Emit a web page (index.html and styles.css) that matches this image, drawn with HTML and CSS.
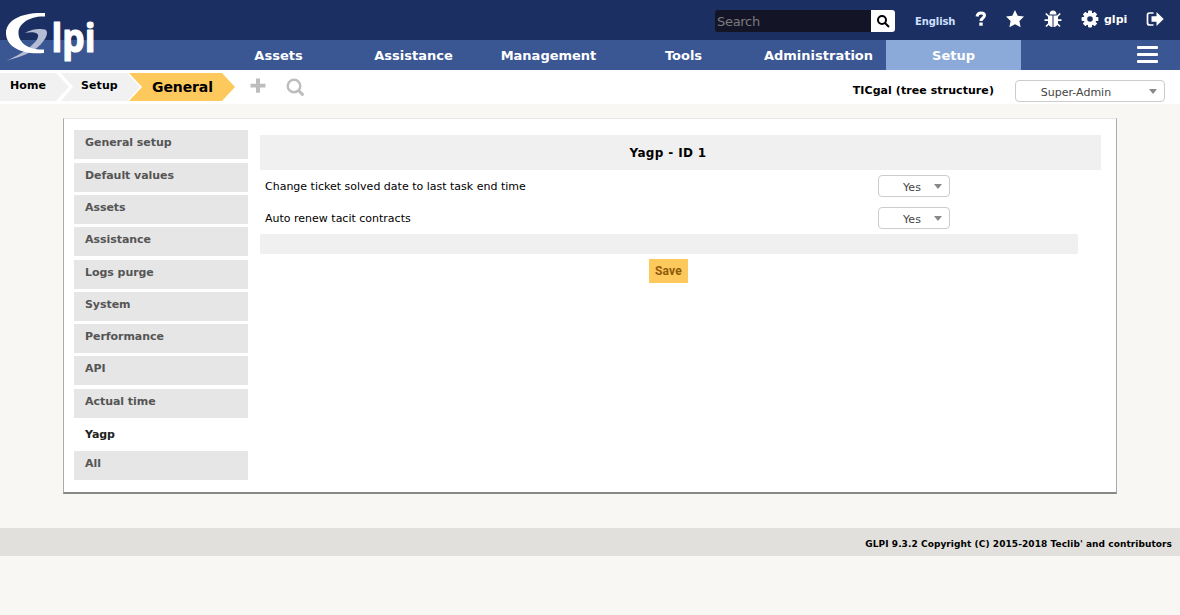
FILE: index.html
```html
<!DOCTYPE html>
<html lang="en">
<head>
<meta charset="utf-8">
<title>GLPI - Setup</title>
<link rel="stylesheet" href="styles.css">
</head>
<body>
<header class="header">
  <a class="logo" href="#">
    <svg width="110" height="70" viewBox="0 0 110 70">
      <path fill="#b4bdd3" d="M25 33C30 29.500 40 28 45 29.500C50 32 45 41 38 47C29 54.500 16 58 6 61C17 56 25 51 31 46C37 41 40 35.500 37 33.500C34 32 30 32 25 33Z"/>
      <path fill="#fff" d="M45 13V16.500C31 15.500 19 23 18.500 32C18 42 27 50 44 49.500V53C22 55 6 47 6 33C6 20 22 12 45 13Z"/>
      <text class="logo-text" x="51.500" y="52" textLength="44" lengthAdjust="spacingAndGlyphs">lpi</text>
    </svg>
  </a>
  <div class="topbar">
    <div class="search"><span class="search-field">Search</span><span class="search-btn"><svg width="14" height="14" viewBox="0 0 14 14" fill="none" stroke="#000" stroke-width="2"><circle cx="6" cy="6" r="4"/><path d="M9 9l4 4"/></svg></span></div>
    <a class="lang">English</a>
    <svg class="i-help" width="12" height="16" viewBox="0 0 12 16"><path fill="none" stroke="#fff" stroke-width="3" d="M2 5.500C2.500 2.500 4 2 6 2C8.500 2 9.500 3.200 9.500 4.600C9.500 7 6 7 6 10"/><path fill="#fff" d="M4.300 11.500h3.400v3.200H4.300z"/></svg>
    <svg class="i-star" width="18" height="18" viewBox="0 0 18 18"><path fill="#fff" d="M9 0l2.700 5.700 6.300.8-4.600 4.400 1.200 6.300L9 14.200 3.400 17.200l1.200-6.300L0 6.500l6.300-.8z"/></svg>
    <svg class="i-bug" width="18" height="18" viewBox="0 0 18 18"><path fill="#fff" d="M5.500 4.400C5.500 2 7 .5 9 .5s3.500 1.500 3.500 3.900zM4 5.400H8.500V17C6 17 4 15 4 12.500zM9.500 5.400H14v7.100C14 15 12 17 9.500 17z"/><path fill="none" stroke="#fff" stroke-width="1.700" d="M1.800 3.500L4.800 6.500M16.200 3.500L13.200 6.500M.5 10.200h4M13.500 10.200h4M2 16.500l3-3M16 16.500l-3-3"/></svg>
    <svg class="i-gear" width="18" height="18" viewBox="0 0 18 18"><g fill="#fff"><g id="t"><rect x="7" y=".6" width="4" height="16.800" rx=".8"/><rect x=".6" y="7" width="16.800" height="4" rx=".8"/></g><use href="#t" transform="rotate(45 9 9)"/></g><circle cx="9" cy="9" r="4.700" fill="none" stroke="#fff" stroke-width="3.400"/><circle cx="9" cy="9" r="2.800" fill="#1b2f62"/></svg>
    <a class="user">glpi</a>
    <svg class="i-out" width="18" height="16" viewBox="0 0 18 16"><path fill="none" stroke="#fff" stroke-width="1.700" d="M7.500 2H3.800Q1.500 2 1.500 4v8Q1.500 14 3.800 14H7.500"/><path fill="#fff" d="M5.500 5.200H10.500V1L17.700 8L10.500 15V10.800H5.500z"/></svg>
  </div>
  <nav class="nav">
    <a>Assets</a><a>Assistance</a><a>Management</a><a>Tools</a><a>Administration</a><a class="on">Setup</a>
    <span class="burger"><i></i><i></i><i></i></span>
  </nav>
</header>
<div class="crumbs">
  <a class="crumb home">Home</a><a class="crumb setup">Setup</a><a class="crumb general">General</a>
  <svg class="i-plus" width="16" height="16" viewBox="0 0 16 16"><path fill="#bdbdbd" d="M6 .5h4v5.300h5.500v3.700H10v5.300H6V9.500H.5V5.800H6z"/></svg>
  <svg class="i-find" width="19" height="19" viewBox="0 0 19 19" fill="none" stroke="#bdbdbd"><circle cx="8" cy="8" r="6.300" stroke-width="2.400"/><path stroke-width="3" stroke-linecap="round" d="M12.800 12.800L16.400 16.400"/></svg>
  <span class="entity">TICgal (tree structure)</span>
  <div class="select profile"><span>Super-Admin</span></div>
</div>
<main class="panel">
  <ul class="tabs">
    <li>General setup</li><li>Default values</li><li>Assets</li><li>Assistance</li><li>Logs purge</li><li>System</li><li>Performance</li><li>API</li><li>Actual time</li><li class="current">Yagp</li><li class="last">All</li>
  </ul>
  <section class="form">
    <h1>Yagp - ID 1</h1>
    <div class="row"><label>Change ticket solved date to last task end time</label><div class="select"><span>Yes</span></div></div>
    <div class="row"><label>Auto renew tacit contracts</label><div class="select"><span>Yes</span></div></div>
    <div class="strip"></div>
    <button class="save">Save</button>
  </section>
</main>
<footer class="footer"><span>GLPI 9.3.2 Copyright (C) 2015-2018 Teclib' and contributors</span></footer>
</body>
</html>
```
FILE: styles.css
```css
* { box-sizing: border-box; }
body { margin: 0; background: #f8f7f3; font: 11px/16px Verdana, "DejaVu Sans", sans-serif; color: #000; }
.header { position: relative; }
.logo { position: absolute; left: 0; top: 0; }
.logo svg { display: block; }
.logo-text { font: bold 39px "Open Sans", sans-serif; fill: #fff; stroke: #fff; stroke-width: 1.2px; stroke-linejoin: round; }
.topbar { height: 40px; background: #1b2f62; display: flex; align-items: flex-start; padding-left: 715px; color: #fff; }
.topbar > * { flex: none; }
.search { display: flex; width: 180px; height: 22px; margin-top: 10px; border-radius: 3px; overflow: hidden; }
.search-field { width: 156px; background: #131426; color: #7b7b7b; font-size: 13px; line-height: 23px; padding-left: 2px; letter-spacing: -.3px; }
.search-btn { flex: 1; background: #fff; display: flex; align-items: center; justify-content: center; }
.lang { width: 41px; margin: 14px 0 0 20px; font-weight: bold; font-size: 10px; letter-spacing: -.1px; color: #cfe0ff; }
.i-help { margin: 11px 0 0 19px; }
.i-star { margin: 10px 0 0 19px; }
.i-bug { margin: 10px 0 0 20px; }
.i-gear { margin: 10px 0 0 19px; }
.user { width: 25px; margin: 12px 0 0 5px; font-weight: bold; font-size: 11px; }
.i-out { margin: 11px 0 0 17px; }
.nav { height: 30px; background: #3a5693; display: flex; padding-left: 211px; }
.nav a { width: 135px; text-align: center; color: #fff; font-weight: bold; font-size: 13px; line-height: 31px; }
.nav .on { background: #8ba9d9; }
.burger { display: flex; flex-direction: column; gap: 4px; margin: 6px 0 0 116px; width: 21px; }
.burger i { height: 3px; background: #fff; border-radius: 1px; }
.crumbs { height: 34px; background: #fff; display: flex; align-items: flex-start; }
.crumbs > * { flex: none; }
.crumb { height: 28px; margin-top: 3px; font-weight: bold; font-size: 11px; letter-spacing: .1px; line-height: 26px; background: #f1f1f1; }
.home { width: 69px; padding-left: 10px; clip-path: polygon(0 0, 56px 0, 100% 50%, 56px 100%, 0 100%); }
.setup { width: 79px; margin-left: -8px; padding-left: 20px; clip-path: polygon(0 0, 66px 0, 100% 50%, 66px 100%, 0 100%, 12px 50%); }
.general { width: 106px; margin-left: -11px; padding-left: 23px; font-size: 14px; letter-spacing: -.1px; line-height: 28px; background: #fec95c; clip-path: polygon(0 0, 93px 0, 100% 50%, 93px 100%, 0 100%, 13px 50%); }
.i-plus { margin: 8px 0 0 15px; }
.i-find { margin: 8px 0 0 20px; }
.entity { margin: 13px 21px 0 auto; font-weight: bold; font-size: 11px; letter-spacing: .07px; }
.select { position: relative; width: 72px; height: 22px; border: 1px solid #ccc; border-radius: 4px; background: #fff; color: #444; line-height: 23px; }
.select span { display: block; text-align: center; padding-right: 4px; }
.select::after { content: ""; position: absolute; right: 7px; top: 8px; border: 4px solid transparent; border-top: 5px solid #888; border-bottom: 0; }
.profile { width: 150px; margin: 10px 15px 0 0; }
.profile span { padding-right: 28px; }
.panel { width: 1054px; height: 376px; margin: 14px 0 0 63px; background: #fff; border: 1px solid #aaa; border-top-color: #e6e6e6; border-bottom: 2px solid #888; display: flex; padding: 11px 0 0 10px; }
.tabs { list-style: none; margin: 0; padding: .35px 0 0; width: 174px; }
.tabs li { height: 29px; margin-bottom: 3.300px; padding-left: 11px; background: #e6e6e6; color: #555; font-weight: bold; line-height: 26px; letter-spacing: -.05px; }
.tabs .current { background: #fff; color: #222; line-height: 28px; }
.tabs .last { line-height: 26px; margin-top: -2px; }
.form { width: 841px; margin-left: 12px; padding-top: 5px; display: flex; flex-direction: column; }
.form h1 { margin: 0; height: 35px; background: #f0f0f0; font-size: 12px; line-height: 36px; text-align: center; letter-spacing: .35px; padding-right: 25px; }
.row { display: flex; align-items: center; height: 32px; padding-left: 5px; }
.row label { width: 613px; padding-top: 1px; }
.strip { width: 818px; height: 20px; background: #f0f0f0; }
.save { width: 39px; height: 24px; margin: 5px 0 0 389px; padding: 0; border: 0; background: #fec95c; color: #8f5a0a; font: bold 12px Roboto, sans-serif; letter-spacing: .2px; }
.footer { height: 28px; margin-top: 34px; background: #e1e0dc; text-align: right; padding-right: 8px; font-weight: bold; font-size: 9px; letter-spacing: .07px; line-height: 32px; }
```
